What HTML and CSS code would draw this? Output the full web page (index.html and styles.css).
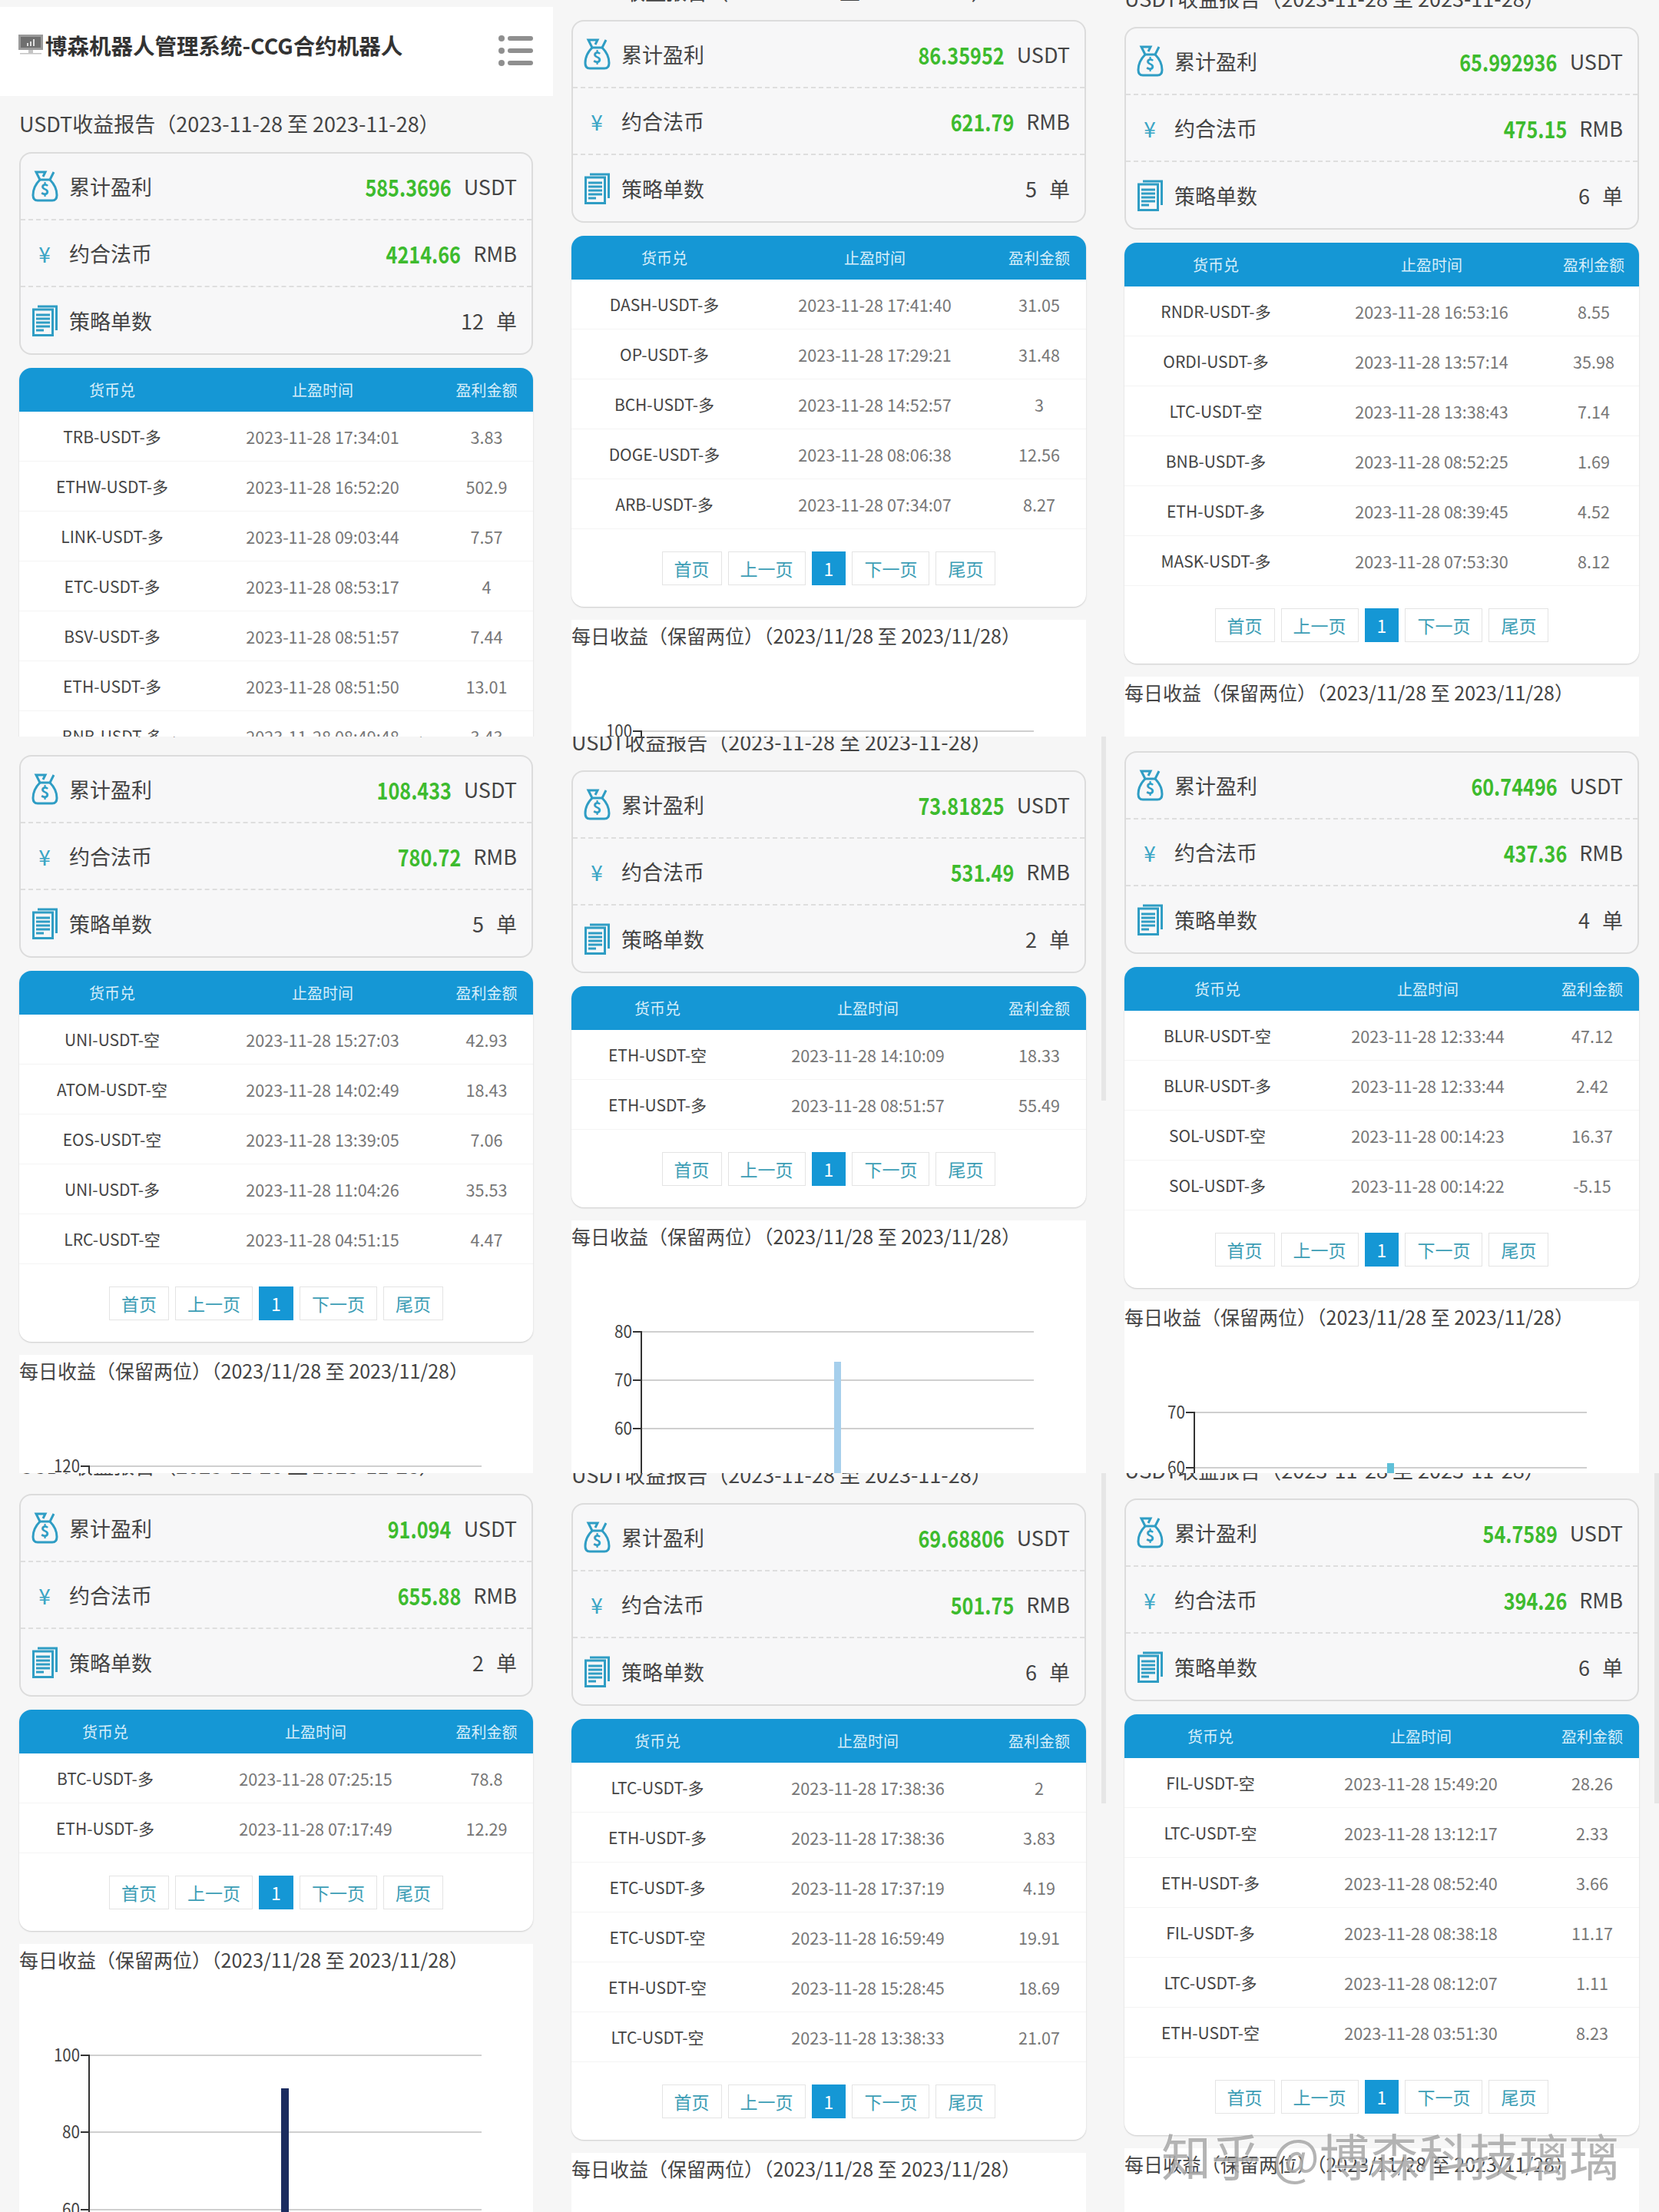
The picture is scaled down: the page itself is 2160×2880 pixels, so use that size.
FILE: index.html
```html
<!DOCTYPE html>
<html lang="zh-CN">
<head>
  <meta charset="UTF-8">
  <title>博森机器人管理系统-CCG合约机器人</title>
  <link rel="stylesheet" href="styles.css">
</head>
<body>
  <svg class="icon-defs" width="0" height="0">
    <symbol id="icon-bag" viewBox="0 0 35 41">
      <path d="M11 12C5 18 2 25 2 32c0 5 2 7 6 7h19c4 0 6-2 6-7 0-7-3-14-9-20" fill="none" stroke="currentColor" stroke-width="3"/>
      <path d="M11 12 6 2h12l-3 6M29 2l-5 10M11 12h13" fill="none" stroke="currentColor" stroke-width="3"/>
      <text x="17.500" y="32" text-anchor="middle" class="icon-dollar">$</text>
    </symbol>
    <symbol id="icon-doc" viewBox="0 0 33 41">
      <path d="M7 2h24.500v31" fill="none" stroke="currentColor" stroke-width="3"/>
      <rect x="1.500" y="6" width="25" height="33.500" fill="none" stroke="currentColor" stroke-width="3"/>
      <path d="M5 13h18M5 18h18M5 23h18M5 28h18M5 33h10" fill="none" stroke="currentColor" stroke-width="3"/>
    </symbol>
  </svg>

  <div class="sheet">

    <!-- row 1 -->
    <section class="panel panel-a">
      <header class="top-bar">
        <svg class="top-logo" width="32" height="26" viewBox="0 0 32 26">
          <rect x="0" y="0" width="32" height="20" fill="#9a9a9a"/>
          <rect x="3" y="3" width="26" height="14" fill="#6f6f6f"/>
          <path d="M11 15v-4h2v4zM15 15V9h2v6zM19 15V6h2v9z" fill="#ddd"/>
          <path d="M13 20h6v4h-6zM2 24h28v1.500H2z" fill="#c4c4c4"/>
        </svg>
        <h1 class="top-title">博森机器人管理系统-CCG合约机器人</h1>
        <div class="top-menu"><i></i><i></i><i></i></div>
      </header>
      <div class="report">
        <h2 class="block-title">USDT收益报告（2023-11-28 至 2023-11-28）</h2>
        <div class="summary">
          <div class="summary-row"><span class="summary-icon"><svg width="35" height="41"><use href="#icon-bag"/></svg></span><span class="summary-label">累计盈利</span><b class="summary-value">585.3696</b><span class="summary-unit">USDT</span></div>
          <div class="summary-row"><span class="summary-icon yen">¥</span><span class="summary-label">约合法币</span><b class="summary-value">4214.66</b><span class="summary-unit">RMB</span></div>
          <div class="summary-row"><span class="summary-icon"><svg width="33" height="41"><use href="#icon-doc"/></svg></span><span class="summary-label">策略单数</span><span class="summary-count">12</span><span class="summary-unit">单</span></div>
        </div>
        <div class="table-card">
          <table class="orders">
            <thead><tr><th>货币兑</th><th>止盈时间</th><th>盈利金额</th></tr></thead>
            <tbody>
              <tr><td>TRB-USDT-多</td><td>2023-11-28 17:34:01</td><td>3.83</td></tr>
              <tr><td>ETHW-USDT-多</td><td>2023-11-28 16:52:20</td><td>502.9</td></tr>
              <tr><td>LINK-USDT-多</td><td>2023-11-28 09:03:44</td><td>7.57</td></tr>
              <tr><td>ETC-USDT-多</td><td>2023-11-28 08:53:17</td><td>4</td></tr>
              <tr><td>BSV-USDT-多</td><td>2023-11-28 08:51:57</td><td>7.44</td></tr>
              <tr><td>ETH-USDT-多</td><td>2023-11-28 08:51:50</td><td>13.01</td></tr>
              <tr><td>BNB-USDT-多</td><td>2023-11-28 08:49:48</td><td>3.43</td></tr>
            </tbody>
          </table>
        </div>
      </div>
    </section>

    <section class="panel panel-d">
      <div class="report">
        <h2 class="block-title">USDT收益报告（2023-11-28 至 2023-11-28）</h2>
        <div class="summary">
          <div class="summary-row"><span class="summary-icon"><svg width="35" height="41"><use href="#icon-bag"/></svg></span><span class="summary-label">累计盈利</span><b class="summary-value">86.35952</b><span class="summary-unit">USDT</span></div>
          <div class="summary-row"><span class="summary-icon yen">¥</span><span class="summary-label">约合法币</span><b class="summary-value">621.79</b><span class="summary-unit">RMB</span></div>
          <div class="summary-row"><span class="summary-icon"><svg width="33" height="41"><use href="#icon-doc"/></svg></span><span class="summary-label">策略单数</span><span class="summary-count">5</span><span class="summary-unit">单</span></div>
        </div>
        <div class="table-card">
          <table class="orders">
            <thead><tr><th>货币兑</th><th>止盈时间</th><th>盈利金额</th></tr></thead>
            <tbody>
              <tr><td>DASH-USDT-多</td><td>2023-11-28 17:41:40</td><td>31.05</td></tr>
              <tr><td>OP-USDT-多</td><td>2023-11-28 17:29:21</td><td>31.48</td></tr>
              <tr><td>BCH-USDT-多</td><td>2023-11-28 14:52:57</td><td>3</td></tr>
              <tr><td>DOGE-USDT-多</td><td>2023-11-28 08:06:38</td><td>12.56</td></tr>
              <tr><td>ARB-USDT-多</td><td>2023-11-28 07:34:07</td><td>8.27</td></tr>
            </tbody>
          </table>
          <div class="pager"><a>首页</a><a>上一页</a><a class="current">1</a><a>下一页</a><a>尾页</a></div>
        </div>
        <div class="chart">
          <h2 class="chart-title">每日收益（保留两位）（2023/11/28 至 2023/11/28）</h2>
          <svg class="chart-plot" width="670" height="360">
            <path class="grid" d="M91 105H602"/>
            <path class="axis" d="M80 105H91V360"/>
            <text x="79" y="113" textLength="34" lengthAdjust="spacingAndGlyphs">100</text>
          </svg>
        </div>
      </div>
    </section>

    <section class="panel panel-g">
      <div class="report">
        <h2 class="block-title">USDT收益报告（2023-11-28 至 2023-11-28）</h2>
        <div class="summary">
          <div class="summary-row"><span class="summary-icon"><svg width="35" height="41"><use href="#icon-bag"/></svg></span><span class="summary-label">累计盈利</span><b class="summary-value">65.992936</b><span class="summary-unit">USDT</span></div>
          <div class="summary-row"><span class="summary-icon yen">¥</span><span class="summary-label">约合法币</span><b class="summary-value">475.15</b><span class="summary-unit">RMB</span></div>
          <div class="summary-row"><span class="summary-icon"><svg width="33" height="41"><use href="#icon-doc"/></svg></span><span class="summary-label">策略单数</span><span class="summary-count">6</span><span class="summary-unit">单</span></div>
        </div>
        <div class="table-card">
          <table class="orders orders-wide">
            <thead><tr><th>货币兑</th><th>止盈时间</th><th>盈利金额</th></tr></thead>
            <tbody>
              <tr><td>RNDR-USDT-多</td><td>2023-11-28 16:53:16</td><td>8.55</td></tr>
              <tr><td>ORDI-USDT-多</td><td>2023-11-28 13:57:14</td><td>35.98</td></tr>
              <tr><td>LTC-USDT-空</td><td>2023-11-28 13:38:43</td><td>7.14</td></tr>
              <tr><td>BNB-USDT-多</td><td>2023-11-28 08:52:25</td><td>1.69</td></tr>
              <tr><td>ETH-USDT-多</td><td>2023-11-28 08:39:45</td><td>4.52</td></tr>
              <tr><td>MASK-USDT-多</td><td>2023-11-28 07:53:30</td><td>8.12</td></tr>
            </tbody>
          </table>
          <div class="pager"><a>首页</a><a>上一页</a><a class="current">1</a><a>下一页</a><a>尾页</a></div>
        </div>
        <div class="chart">
          <h2 class="chart-title">每日收益（保留两位）（2023/11/28 至 2023/11/28）</h2>
        </div>
      </div>
    </section>

    <!-- row 2 -->
    <section class="panel panel-b">
      <div class="report">
        <h2 class="block-title">USDT收益报告（2023-11-28 至 2023-11-28）</h2>
        <div class="summary">
          <div class="summary-row"><span class="summary-icon"><svg width="35" height="41"><use href="#icon-bag"/></svg></span><span class="summary-label">累计盈利</span><b class="summary-value">108.433</b><span class="summary-unit">USDT</span></div>
          <div class="summary-row"><span class="summary-icon yen">¥</span><span class="summary-label">约合法币</span><b class="summary-value">780.72</b><span class="summary-unit">RMB</span></div>
          <div class="summary-row"><span class="summary-icon"><svg width="33" height="41"><use href="#icon-doc"/></svg></span><span class="summary-label">策略单数</span><span class="summary-count">5</span><span class="summary-unit">单</span></div>
        </div>
        <div class="table-card">
          <table class="orders">
            <thead><tr><th>货币兑</th><th>止盈时间</th><th>盈利金额</th></tr></thead>
            <tbody>
              <tr><td>UNI-USDT-空</td><td>2023-11-28 15:27:03</td><td>42.93</td></tr>
              <tr><td>ATOM-USDT-空</td><td>2023-11-28 14:02:49</td><td>18.43</td></tr>
              <tr><td>EOS-USDT-空</td><td>2023-11-28 13:39:05</td><td>7.06</td></tr>
              <tr><td>UNI-USDT-多</td><td>2023-11-28 11:04:26</td><td>35.53</td></tr>
              <tr><td>LRC-USDT-空</td><td>2023-11-28 04:51:15</td><td>4.47</td></tr>
            </tbody>
          </table>
          <div class="pager"><a>首页</a><a>上一页</a><a class="current">1</a><a>下一页</a><a>尾页</a></div>
        </div>
        <div class="chart">
          <h2 class="chart-title">每日收益（保留两位）（2023/11/28 至 2023/11/28）</h2>
          <svg class="chart-plot" width="670" height="360">
            <path class="grid" d="M91 105H602"/>
            <path class="axis" d="M80 105H91V360"/>
            <text x="79" y="113" textLength="34" lengthAdjust="spacingAndGlyphs">120</text>
          </svg>
        </div>
      </div>
    </section>

    <section class="panel panel-e">
      <div class="report">
        <h2 class="block-title">USDT收益报告（2023-11-28 至 2023-11-28）</h2>
        <div class="summary">
          <div class="summary-row"><span class="summary-icon"><svg width="35" height="41"><use href="#icon-bag"/></svg></span><span class="summary-label">累计盈利</span><b class="summary-value">73.81825</b><span class="summary-unit">USDT</span></div>
          <div class="summary-row"><span class="summary-icon yen">¥</span><span class="summary-label">约合法币</span><b class="summary-value">531.49</b><span class="summary-unit">RMB</span></div>
          <div class="summary-row"><span class="summary-icon"><svg width="33" height="41"><use href="#icon-doc"/></svg></span><span class="summary-label">策略单数</span><span class="summary-count">2</span><span class="summary-unit">单</span></div>
        </div>
        <div class="table-card">
          <table class="orders orders-tight">
            <thead><tr><th>货币兑</th><th>止盈时间</th><th>盈利金额</th></tr></thead>
            <tbody>
              <tr><td>ETH-USDT-空</td><td>2023-11-28 14:10:09</td><td>18.33</td></tr>
              <tr><td>ETH-USDT-多</td><td>2023-11-28 08:51:57</td><td>55.49</td></tr>
            </tbody>
          </table>
          <div class="pager"><a>首页</a><a>上一页</a><a class="current">1</a><a>下一页</a><a>尾页</a></div>
        </div>
        <div class="chart">
          <h2 class="chart-title">每日收益（保留两位）（2023/11/28 至 2023/11/28）</h2>
          <svg class="chart-plot" width="670" height="360">
            <path class="grid" d="M91 105H602M91 168H602M91 231H602"/>
            <path class="axis" d="M80 105H91V360M80 168H91M80 231H91"/>
            <rect class="bar-light" x="342" y="144" width="9" height="216"/>
            <text x="79" y="113" textLength="23" lengthAdjust="spacingAndGlyphs">80</text>
            <text x="79" y="176" textLength="23" lengthAdjust="spacingAndGlyphs">70</text>
            <text x="79" y="239" textLength="23" lengthAdjust="spacingAndGlyphs">60</text>
          </svg>
        </div>
      </div>
      <i class="scroll-thumb scroll-thumb-long"></i>
    </section>

    <section class="panel panel-h">
      <div class="report">
        <h2 class="block-title">USDT收益报告（2023-11-28 至 2023-11-28）</h2>
        <div class="summary">
          <div class="summary-row"><span class="summary-icon"><svg width="35" height="41"><use href="#icon-bag"/></svg></span><span class="summary-label">累计盈利</span><b class="summary-value">60.74496</b><span class="summary-unit">USDT</span></div>
          <div class="summary-row"><span class="summary-icon yen">¥</span><span class="summary-label">约合法币</span><b class="summary-value">437.36</b><span class="summary-unit">RMB</span></div>
          <div class="summary-row"><span class="summary-icon"><svg width="33" height="41"><use href="#icon-doc"/></svg></span><span class="summary-label">策略单数</span><span class="summary-count">4</span><span class="summary-unit">单</span></div>
        </div>
        <div class="table-card">
          <table class="orders">
            <thead><tr><th>货币兑</th><th>止盈时间</th><th>盈利金额</th></tr></thead>
            <tbody>
              <tr><td>BLUR-USDT-空</td><td>2023-11-28 12:33:44</td><td>47.12</td></tr>
              <tr><td>BLUR-USDT-多</td><td>2023-11-28 12:33:44</td><td>2.42</td></tr>
              <tr><td>SOL-USDT-空</td><td>2023-11-28 00:14:23</td><td>16.37</td></tr>
              <tr><td>SOL-USDT-多</td><td>2023-11-28 00:14:22</td><td>-5.15</td></tr>
            </tbody>
          </table>
          <div class="pager"><a>首页</a><a>上一页</a><a class="current">1</a><a>下一页</a><a>尾页</a></div>
        </div>
        <div class="chart">
          <h2 class="chart-title">每日收益（保留两位）（2023/11/28 至 2023/11/28）</h2>
          <svg class="chart-plot" width="670" height="360">
            <path class="grid" d="M91 105H602M91 177H602"/>
            <path class="axis" d="M80 105H91V360M80 177H91"/>
            <rect class="bar-teal" x="342" y="171" width="9" height="100"/>
            <text x="79" y="113" textLength="23" lengthAdjust="spacingAndGlyphs">70</text>
            <text x="79" y="185" textLength="23" lengthAdjust="spacingAndGlyphs">60</text>
          </svg>
        </div>
      </div>
    </section>

    <!-- row 3 -->
    <section class="panel panel-c">
      <div class="report">
        <h2 class="block-title">USDT收益报告（2023-11-28 至 2023-11-28）</h2>
        <div class="summary">
          <div class="summary-row"><span class="summary-icon"><svg width="35" height="41"><use href="#icon-bag"/></svg></span><span class="summary-label">累计盈利</span><b class="summary-value">91.094</b><span class="summary-unit">USDT</span></div>
          <div class="summary-row"><span class="summary-icon yen">¥</span><span class="summary-label">约合法币</span><b class="summary-value">655.88</b><span class="summary-unit">RMB</span></div>
          <div class="summary-row"><span class="summary-icon"><svg width="33" height="41"><use href="#icon-doc"/></svg></span><span class="summary-label">策略单数</span><span class="summary-count">2</span><span class="summary-unit">单</span></div>
        </div>
        <div class="table-card">
          <table class="orders orders-tight">
            <thead><tr><th>货币兑</th><th>止盈时间</th><th>盈利金额</th></tr></thead>
            <tbody>
              <tr><td>BTC-USDT-多</td><td>2023-11-28 07:25:15</td><td>78.8</td></tr>
              <tr><td>ETH-USDT-多</td><td>2023-11-28 07:17:49</td><td>12.29</td></tr>
            </tbody>
          </table>
          <div class="pager"><a>首页</a><a>上一页</a><a class="current">1</a><a>下一页</a><a>尾页</a></div>
        </div>
        <div class="chart">
          <h2 class="chart-title">每日收益（保留两位）（2023/11/28 至 2023/11/28）</h2>
          <svg class="chart-plot" width="670" height="360">
            <path class="grid" d="M91 105H602M91 205H602M91 306H602"/>
            <path class="axis" d="M80 105H91V360M80 205H91M80 306H91"/>
            <rect class="bar-dark" x="341" y="148" width="10" height="212"/>
            <text x="79" y="113" textLength="34" lengthAdjust="spacingAndGlyphs">100</text>
            <text x="79" y="213" textLength="23" lengthAdjust="spacingAndGlyphs">80</text>
            <text x="79" y="314" textLength="23" lengthAdjust="spacingAndGlyphs">60</text>
          </svg>
        </div>
      </div>
    </section>

    <section class="panel panel-f">
      <div class="report">
        <h2 class="block-title">USDT收益报告（2023-11-28 至 2023-11-28）</h2>
        <div class="summary">
          <div class="summary-row"><span class="summary-icon"><svg width="35" height="41"><use href="#icon-bag"/></svg></span><span class="summary-label">累计盈利</span><b class="summary-value">69.68806</b><span class="summary-unit">USDT</span></div>
          <div class="summary-row"><span class="summary-icon yen">¥</span><span class="summary-label">约合法币</span><b class="summary-value">501.75</b><span class="summary-unit">RMB</span></div>
          <div class="summary-row"><span class="summary-icon"><svg width="33" height="41"><use href="#icon-doc"/></svg></span><span class="summary-label">策略单数</span><span class="summary-count">6</span><span class="summary-unit">单</span></div>
        </div>
        <div class="table-card">
          <table class="orders orders-tight">
            <thead><tr><th>货币兑</th><th>止盈时间</th><th>盈利金额</th></tr></thead>
            <tbody>
              <tr><td>LTC-USDT-多</td><td>2023-11-28 17:38:36</td><td>2</td></tr>
              <tr><td>ETH-USDT-多</td><td>2023-11-28 17:38:36</td><td>3.83</td></tr>
              <tr><td>ETC-USDT-多</td><td>2023-11-28 17:37:19</td><td>4.19</td></tr>
              <tr><td>ETC-USDT-空</td><td>2023-11-28 16:59:49</td><td>19.91</td></tr>
              <tr><td>ETH-USDT-空</td><td>2023-11-28 15:28:45</td><td>18.69</td></tr>
              <tr><td>LTC-USDT-空</td><td>2023-11-28 13:38:33</td><td>21.07</td></tr>
            </tbody>
          </table>
          <div class="pager"><a>首页</a><a>上一页</a><a class="current">1</a><a>下一页</a><a>尾页</a></div>
        </div>
        <div class="chart">
          <h2 class="chart-title">每日收益（保留两位）（2023/11/28 至 2023/11/28）</h2>
        </div>
      </div>
      <i class="scroll-thumb"></i>
    </section>

    <section class="panel panel-i">
      <div class="report">
        <h2 class="block-title">USDT收益报告（2023-11-28 至 2023-11-28）</h2>
        <div class="summary">
          <div class="summary-row"><span class="summary-icon"><svg width="35" height="41"><use href="#icon-bag"/></svg></span><span class="summary-label">累计盈利</span><b class="summary-value">54.7589</b><span class="summary-unit">USDT</span></div>
          <div class="summary-row"><span class="summary-icon yen">¥</span><span class="summary-label">约合法币</span><b class="summary-value">394.26</b><span class="summary-unit">RMB</span></div>
          <div class="summary-row"><span class="summary-icon"><svg width="33" height="41"><use href="#icon-doc"/></svg></span><span class="summary-label">策略单数</span><span class="summary-count">6</span><span class="summary-unit">单</span></div>
        </div>
        <div class="table-card">
          <table class="orders orders-tight">
            <thead><tr><th>货币兑</th><th>止盈时间</th><th>盈利金额</th></tr></thead>
            <tbody>
              <tr><td>FIL-USDT-空</td><td>2023-11-28 15:49:20</td><td>28.26</td></tr>
              <tr><td>LTC-USDT-空</td><td>2023-11-28 13:12:17</td><td>2.33</td></tr>
              <tr><td>ETH-USDT-多</td><td>2023-11-28 08:52:40</td><td>3.66</td></tr>
              <tr><td>FIL-USDT-多</td><td>2023-11-28 08:38:18</td><td>11.17</td></tr>
              <tr><td>LTC-USDT-多</td><td>2023-11-28 08:12:07</td><td>1.11</td></tr>
              <tr><td>ETH-USDT-空</td><td>2023-11-28 03:51:30</td><td>8.23</td></tr>
            </tbody>
          </table>
          <div class="pager"><a>首页</a><a>上一页</a><a class="current">1</a><a>下一页</a><a>尾页</a></div>
        </div>
        <div class="chart">
          <h2 class="chart-title">每日收益（保留两位）（2023/11/28 至 2023/11/28）</h2>
        </div>
      </div>
      <i class="scroll-thumb"></i>
    </section>

    <div class="watermark">知乎 @博森科技璃璃</div>
  </div>
</body>
</html>
```

FILE: styles.css
```css
body {
  margin: 0;
  background: #f6f6f6;
  color: #444;
  font-family: "Noto Sans CJK SC", "Noto Sans", sans-serif;
}

.icon-defs {
  position: absolute;
}

.icon-dollar {
  fill: currentColor;
  font-size: 20px;
  font-weight: 700;
}

/* three columns by three rows of cropped phone screens */
.sheet {
  position: relative;
  display: grid;
  grid-template-columns: repeat(3, 720px);
  grid-template-rows: 959px 959px 962px;
  width: 2160px;
  height: 2880px;
  overflow: hidden;
}

.panel {
  position: relative;
  padding: 0 26px 0 25px;
  overflow: hidden;
}

.panel-d, .panel-g, .panel-e, .panel-h, .panel-f, .panel-i {
  padding: 0 26px 0 24px;
}

.panel-a .report { margin-top: 16px; }
.panel-b .report { margin-top: -33px; }
.panel-c .report { margin-top: -30px; }
.panel-d .report { margin-top: -31px; }
.panel-e .report { margin-top: -13px; }
.panel-f .report { margin-top: -18px; }
.panel-g .report { margin-top: -22px; }
.panel-h .report { margin-top: -38px; }
.panel-i .report { margin-top: -24px; }

.top-bar {
  display: flex;
  align-items: center;
  margin: 9px -26px 0 -25px;
  padding: 0 26px 18px 24px;
  height: 98px;
  background: #fff;
}

.top-logo {
  flex: none;
  margin-right: 3px;
}

.top-title {
  flex: 1;
  margin: 0;
  color: #333;
  font-size: 28.500px;
  font-weight: 700;
}

.top-menu {
  display: flex;
  flex-direction: column;
  gap: 10px;
  width: 45px;
  margin-top: 16px;
}

.top-menu i {
  position: relative;
  height: 6px;
  margin-left: 12px;
  background: #8f8f8f;
  border-radius: 3px;
}

.top-menu i::before {
  content: "";
  position: absolute;
  left: -12px;
  top: -1px;
  width: 8px;
  height: 8px;
  background: #8f8f8f;
  border-radius: 50%;
}

.block-title, .chart-title {
  margin: 0;
  height: 40px;
  color: #444;
  font-size: 27px;
  font-weight: 400;
  line-height: 40px;
  white-space: nowrap;
}

.chart-title {
  font-size: 25px;
}

.summary {
  margin-top: 17px;
  height: 264px;
  box-sizing: border-box;
  background: #f7f7f8;
  border: 2px solid #dcdcdc;
  border-radius: 16px;
}

.summary-row {
  display: flex;
  align-items: center;
  box-sizing: border-box;
  height: 87px;
  padding: 0 19px 0 13px;
  font-size: 27px;
  border-bottom: 2px dashed #dedede;
  color: #444;
}

.summary-row:last-child {
  border-bottom: none;
}

.summary-icon {
  display: flex;
  justify-content: center;
  flex: none;
  width: 36px;
  margin-right: 14px;
  color: #2f9dc4;
}

.yen {
  color: #3aa5c5;
  font-size: 28px;
  line-height: 1;
}

.summary-label {
  flex: 1;
}

/* the screenshot's numbers are tall and narrow */
.summary-value {
  display: inline-block;
  margin-right: 16px;
  color: #3dbb2e;
  font-size: 30px;
  font-weight: 700;
  transform: scaleX(0.84);
  transform-origin: right center;
}

.summary-count {
  margin-right: 16px;
}

.table-card {
  margin-top: 17px;
  background: #fff;
  border-radius: 16px;
  box-shadow: 0 1px 2px rgba(0, 0, 0, 0.18);
}

.orders {
  width: 100%;
  border-collapse: collapse;
  table-layout: fixed;
}

.orders th {
  height: 57px;
  padding: 0;
  color: #d8eefa;
  background: #1597d5;
  font-size: 20px;
  font-weight: 400;
}

.orders th:first-child {
  width: 242px;
  border-top-left-radius: 16px;
}

.orders th:nth-child(2) {
  width: 306px;
}

.orders th:last-child {
  border-top-right-radius: 16px;
}

.orders-tight th:first-child {
  width: 224px;
}

.orders-tight th:nth-child(2) {
  width: 324px;
}

.orders-wide th:first-child {
  width: 238px;
}

.orders-wide th:nth-child(2) {
  width: 324px;
}

.orders-wide th:last-child, .orders-wide td:last-child {
  padding-right: 10px;
}

.orders td {
  height: 64px;
  padding: 0;
  border-bottom: 1px solid #f4f4f4;
  color: #777;
  font-size: 21.600px;
  text-align: center;
}

.orders td:first-child {
  color: #444;
  font-size: 21px;
}

.pager {
  display: flex;
  justify-content: center;
  gap: 8px;
  padding: 29px 0 28px;
}

.pager a {
  height: 44px;
  box-sizing: border-box;
  padding: 0 15px;
  border: 1px solid #e4e4e4;
  color: #3c9db5;
  font-size: 23px;
  line-height: 42px;
}

.pager a.current {
  border-color: #1597d5;
  background: #1597d5;
  color: #fff;
}

.chart {
  margin-top: 17px;
  height: 420px;
  background: #fff;
}

.chart-plot {
  display: block;
}

.chart-plot text {
  fill: #444;
  font-size: 23px;
  text-anchor: end;
}

.grid {
  fill: none;
  stroke: #cfcfcf;
  stroke-width: 2;
}

.axis {
  fill: none;
  stroke: #333;
  stroke-width: 2;
}

.bar-light { fill: #a6cfec; }
.bar-teal { fill: #5fc0d8; }
.bar-dark { fill: #1b2c5f; }

.scroll-thumb {
  position: absolute;
  top: 0;
  right: 0;
  width: 6px;
  height: 430px;
  background: #e6e6e6;
}

.scroll-thumb-long {
  height: 474px;
}

.watermark {
  position: absolute;
  right: 52px;
  bottom: 42px;
  color: rgba(130, 130, 130, 0.6);
  font-size: 65px;
  line-height: 1;
  text-shadow: 1px 1px 0 rgba(255, 255, 255, 0.7);
  white-space: nowrap;
}
```
